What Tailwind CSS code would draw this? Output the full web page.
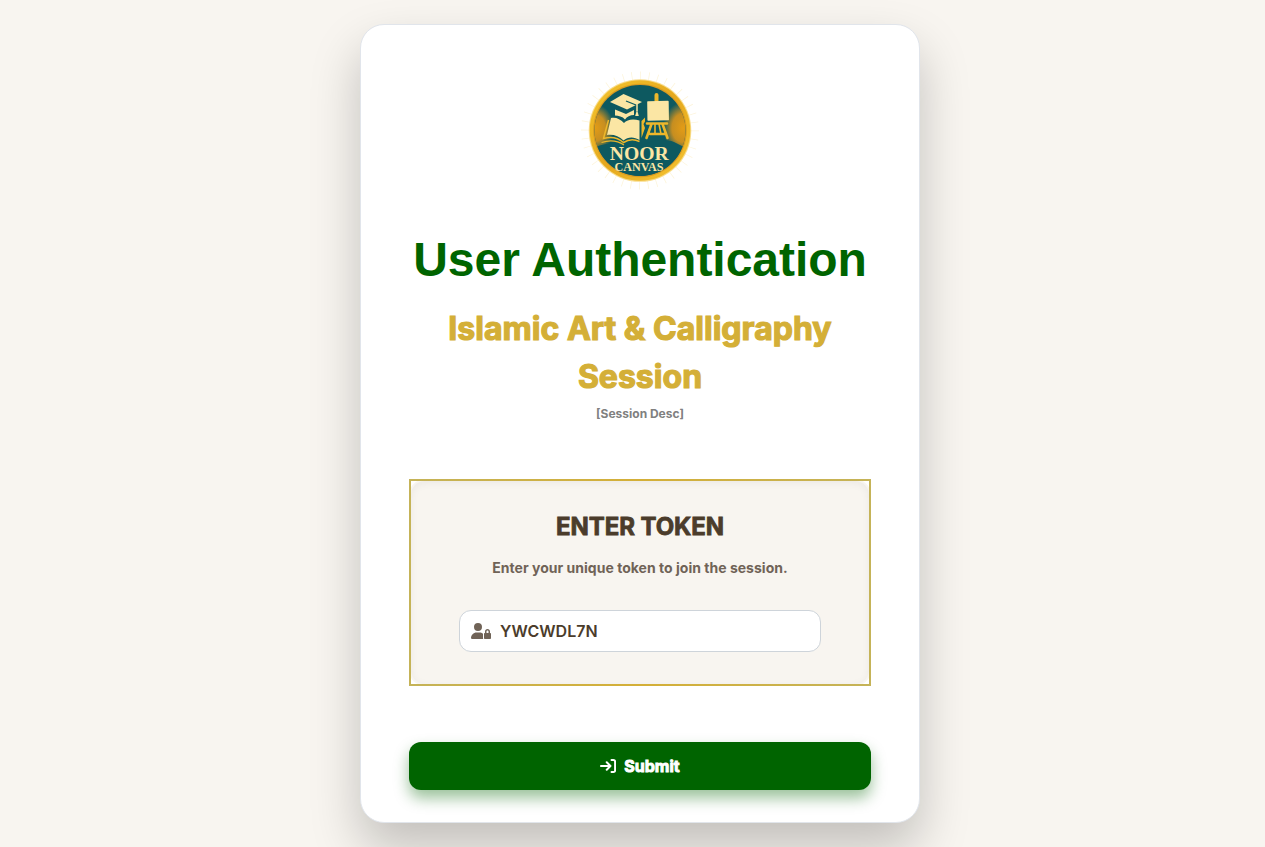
<!DOCTYPE html>
<html lang="en">
<head>
<meta charset="utf-8">
<title>Noor Canvas</title>
<script src="https://cdn.jsdelivr.net/npm/@tailwindcss/browser@4"></script>
</head>
<body class="bg-[#f8f5f0] font-[Inter,sans-serif] h-[847px] overflow-hidden pt-6 pl-[360px]">
<main class="w-[560px] h-[799px] bg-white rounded-3xl border border-[#e1e5eb] px-12 pt-[45px] flex flex-col items-center text-center shadow-[0_25px_50px_rgba(0,0,0,0.22)]">
  <svg class="w-[120px] h-[120px] shrink-0" viewBox="0 0 120 120">
    <defs>
      <radialGradient id="gl"><stop offset="0" stop-color="#e39c16"/><stop offset=".55" stop-color="#c68e21"/><stop offset="1" stop-color="#c68e21" stop-opacity="0"/></radialGradient>
      <linearGradient id="rim" x1="0" y1="0" x2="1" y2="1"><stop offset="0" stop-color="#f5c62f"/><stop offset=".5" stop-color="#e5a81d"/><stop offset="1" stop-color="#f6c633"/></linearGradient>
      <clipPath id="disc"><circle cx="60" cy="60.500" r="45.500"/></clipPath>
    </defs>
    <circle cx="60" cy="60.500" r="54.500" fill="none" stroke="#fdf5dd" stroke-width="9" stroke-dasharray=".8 7.750"/>
    <circle cx="60" cy="60.500" r="51.300" fill="#f8dc8a"/>
    <circle cx="60" cy="60.500" r="50.300" fill="url(#rim)"/>
    <circle cx="60" cy="60.500" r="46.800" fill="#d99b20"/>
    <circle cx="60" cy="60.500" r="45.500" fill="#0d5960"/>
    <g clip-path="url(#disc)">
      <ellipse cx="15" cy="58" rx="19" ry="24" fill="url(#gl)"/>
      <ellipse cx="103" cy="58" rx="20" ry="26" fill="url(#gl)"/>
      <path d="M10 80C24 71 45 71 60 76C75 69 85 69 94 72L110 80V112H10Z" fill="#0d5960"/>
    </g>
    <g fill="#fbe6a4">
      <path d="M30 32L43.500 24L62 32L47 39.500Z"/>
      <path d="M35 39.500L46 44L54 40V45C50 45 47 46.500 45 49.500C42.500 46.500 38.500 45.500 35 45.500Z"/>
      <path d="M31 48C36 47 40 49 44 53C47 49.500 53 48.500 59.500 50.500V70C54 66.500 48 66.500 43.500 70.500C39 66 33 64 27 65Z"/>
    </g>
    <path d="M57 34V41" fill="none" stroke="#fbe6a4" stroke-width="1.500"/>
    <path d="M57 39.500L58.800 46H55.200Z" fill="#fbe6a4"/>
    <path d="M46 31L56 35" stroke="#0d5960" stroke-width="1.200"/>
    <path d="M28.500 50L23.500 68.500C32 66 39 68.500 43.500 72.500C49 69 54 69 59.500 71.500" fill="none" stroke="#edb72b" stroke-width="1.500"/>
    <path d="M21.500 72.500C31 69.500 38 71 44 75" fill="none" stroke="#edb72b" stroke-width="1.300"/>
    <path d="M61.500 51L65 47.500V51.500L63.500 54L65 58L61.500 68V60Z" fill="#edb72b"/>
    <g fill="none" stroke="#edb72b" stroke-width="2.600" stroke-linecap="round">
      <path d="M76.500 25V31" stroke-width="4"/>
      <path d="M67 53.500H87M70 64H85M71.500 54L66.500 68M82.500 54L87.500 68"/>
      <path d="M75 54V64M79 54L81 64" stroke-width="1.600"/>
    </g>
    <rect x="67.300" y="31" width="21.500" height="19.500" rx=".7" fill="#fbe6a4" transform="rotate(-.8 78 40)"/>
    <text x="59.300" y="89.800" text-anchor="middle" textLength="59" lengthAdjust="spacingAndGlyphs" font-family="Liberation Serif, serif" font-weight="700" font-size="19.500" fill="#fbe6a4">NOOR</text>
    <text x="59" y="100.500" text-anchor="middle" textLength="49" lengthAdjust="spacingAndGlyphs" font-family="Liberation Serif, serif" font-weight="700" font-size="12" fill="#fbe6a4">CANVAS</text>
  </svg>
  <h1 class="mt-[38px] h-[64px] leading-[64px] text-5xl font-bold font-[Liberation_Sans,Arial,sans-serif] tracking-[-0.04px] text-[#006400] whitespace-nowrap">User Authentication</h1>
  <h2 class="mt-[13px] text-[32px] leading-[48px] font-bold tracking-[0.02px] [-webkit-text-stroke:1.2px_#d4af37] text-[#d4af37]">Islamic Art &amp; Calligraphy<br>Session</h2>
  <p class="mt-1 text-xs leading-[18px] font-bold text-[#808080]">[Session Desc]</p>
  <section class="mt-[56px] w-[462px] h-[207px] shrink-0 border-2 [border-image:linear-gradient(to_right,#c5b358,#d4af37,#c5b358)_1] rounded-2xl bg-[#f8f5f0] shadow-[inset_0_2px_8px_rgba(0,0,0,0.05)] px-12 pt-[27px] flex flex-col items-center">
    <h3 class="text-2xl leading-[38px] font-bold tracking-[-0.08px] [-webkit-text-stroke:0.8px_#4b3c2b] text-[#4b3c2b]">ENTER TOKEN</h3>
    <p class="mt-[11px] text-sm leading-[22px] font-bold tracking-[0.02px] text-[#706357]">Enter your unique token to join the session.</p>
    <div class="mt-[31px] w-[362px] h-[42px] shrink-0 rounded-xl border border-[#ced4da] bg-white flex items-center pl-[11px] gap-[9px]">
      <svg class="w-5 h-4 shrink-0" viewBox="0 0 640 512" fill="#706357"><path d="M224 256A128 128 0 1 0 224 0a128 128 0 1 0 0 256zm-45.700 48C79.800 304 0 383.800 0 482.300C0 498.700 13.300 512 29.700 512H392.600c-5.400-9.400-8.600-20.300-8.600-32V352c0-2.100.1-4.200.3-6.300c-31-26-71-41.700-114.600-41.700H178.300zM528 240c17.700 0 32 14.300 32 32v48H496V272c0-17.700 14.300-32 32-32zm-80 32v48c-17.700 0-32 14.300-32 32V480c0 17.700 14.300 32 32 32H608c17.700 0 32-14.300 32-32V352c0-17.700-14.300-32-32-32V272c0-44.200-35.800-80-80-80s-80 35.800-80 80z"/></svg>
      <span class="text-base font-semibold text-[#4b3c2b]">YWCWDL7N</span>
    </div>
  </section>
  <button class="mt-[56px] w-[462px] h-12 shrink-0 rounded-xl bg-[#006400] text-white text-base font-bold flex items-center justify-center gap-2 shadow-[0_8px_15px_rgba(0,100,0,0.4)]">
    <svg class="w-4 h-4" viewBox="0 0 512 512" fill="none" stroke="white" stroke-width="64" stroke-linecap="round" stroke-linejoin="round"><path d="M28 256H325M215 135L335 256L215 377M368 61H430Q483 61 483 114V398Q483 451 430 451H368"/></svg>
    <span class="[-webkit-text-stroke:0.9px_white]">Submit</span>
  </button>
</main>
</body>
</html>
